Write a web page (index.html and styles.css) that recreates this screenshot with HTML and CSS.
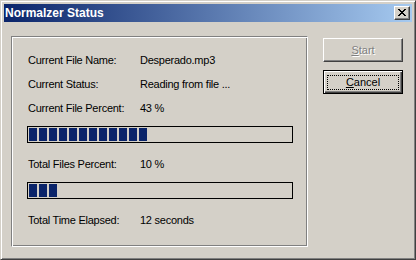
FILE: index.html
```html
<!DOCTYPE html>
<html>
<head>
<meta charset="utf-8">
<link rel="stylesheet" href="styles.css">
</head>
<body>
<div class="window">
  <div class="titlebar">
    <span class="title">Normalzer Status</span>
    <span class="close">
      <svg width="8" height="7" viewBox="0 0 8 7" shape-rendering="crispEdges">
        <path d="M0 0h2v1h-2zM6 0h2v1h-2zM1 1h2v1h-2zM5 1h2v1h-2zM2 2h4v1h-4zM3 3h2v1h-2zM2 4h4v1h-4zM1 5h2v1h-2zM5 5h2v1h-2zM0 6h2v1h-2zM6 6h2v1h-2z" fill="#000"/>
      </svg>
    </span>
  </div>
  <div class="client">
    <div class="group">
      <div class="row"><span class="label">Current File Name:</span><span class="value">Desperado.mp3</span></div>
      <div class="row"><span class="label">Current Status:</span><span class="value">Reading from file ...</span></div>
      <div class="row"><span class="label">Current File Percent:</span><span class="value">43 %</span></div>
      <div class="progress"><div class="fill" style="width:118px"></div></div>
      <div class="row"><span class="label">Total Files Percent:</span><span class="value">10 %</span></div>
      <div class="progress"><div class="fill" style="width:28px"></div></div>
      <div class="row"><span class="label">Total Time Elapsed:</span><span class="value">12 seconds</span></div>
    </div>
    <div class="buttons">
      <div class="btn disabled"><span><u>S</u>tart</span></div>
      <div class="btn default"><span><u>C</u>ancel</span></div>
    </div>
  </div>
</div>
</body>
</html>
```

FILE: styles.css
```css
html, body {
  margin: 0;
  padding: 0;
  background: #d4d0c8;
}
.window {
  width: 416px;
  height: 260px;
  box-sizing: border-box;
  border: 1px solid;
  border-color: #d4d0c8 #404040 #404040 #d4d0c8;
  box-shadow: inset 1px 1px #ffffff, inset -1px -1px #808080;
  padding: 3px;
  background: #d4d0c8;
  font-family: "Liberation Sans", Arial, sans-serif;
  font-size: 11px;
  color: #000;
}
.titlebar {
  height: 18px;
  display: flex;
  align-items: center;
  background: linear-gradient(to right, #0a246a, #a6caf0);
  padding-left: 1px;
}
.title {
  color: #fff;
  font-weight: bold;
  font-size: 12px;
  line-height: 14px;
}
.close {
  margin-left: auto;
  margin-right: 2px;
  width: 16px;
  height: 14px;
  box-sizing: border-box;
  background: #d4d0c8;
  border: 1px solid;
  border-color: #fff #404040 #404040 #fff;
  box-shadow: inset -1px -1px #808080;
  display: flex;
  align-items: center;
  justify-content: center;
}
.close svg {
  display: block;
  margin: 0 1px 1px 0;
}
.client {
  display: flex;
  padding: 14px 0 0 7px;
}
.group {
  width: 297px;
  height: 211px;
  box-sizing: border-box;
  border: 1px solid;
  border-color: #808080 #fff #fff #808080;
  box-shadow: inset 1px 1px #fff, inset -1px -1px #808080;
  padding: 17px 14px 0 15px;
  display: flex;
  flex-direction: column;
}
.row {
  display: flex;
  height: 13px;
  line-height: 13px;
  white-space: nowrap;
  margin-bottom: 11px;
  letter-spacing: -0.25px;
}
.label {
  width: 112px;
  flex: none;
  padding-left: 1px;
}
.progress {
  width: 266px;
  height: 17px;
  box-sizing: border-box;
  border: 1px solid #000;
  padding: 1px;
  margin-bottom: 15px;
}
.fill {
  height: 13px;
  background: repeating-linear-gradient(to right, #0a246a 0 8px, transparent 8px 10px);
}
.buttons {
  display: flex;
  flex-direction: column;
  gap: 8px;
  margin-left: 15px;
  margin-top: 2px;
}
.btn {
  width: 80px;
  height: 24px;
  box-sizing: border-box;
  border: 1px solid;
  border-color: #fff #404040 #404040 #fff;
  box-shadow: inset -1px -1px #808080;
  display: flex;
  align-items: center;
  justify-content: center;
  position: relative;
  line-height: 13px;
}
.btn.disabled {
  color: #808080;
  text-shadow: 1px 1px #fff;
}
.btn.default {
  border-color: #000;
  box-shadow: inset 1px 1px #fff, inset -1px -1px #404040, inset -2px -2px #808080;
}
.btn.default::after {
  content: "";
  position: absolute;
  left: 3px;
  top: 4px;
  right: 3px;
  bottom: 3px;
  border: 1px dotted #000;
}
u {
  text-decoration: underline;
  text-underline-offset: 1px;
}
```
